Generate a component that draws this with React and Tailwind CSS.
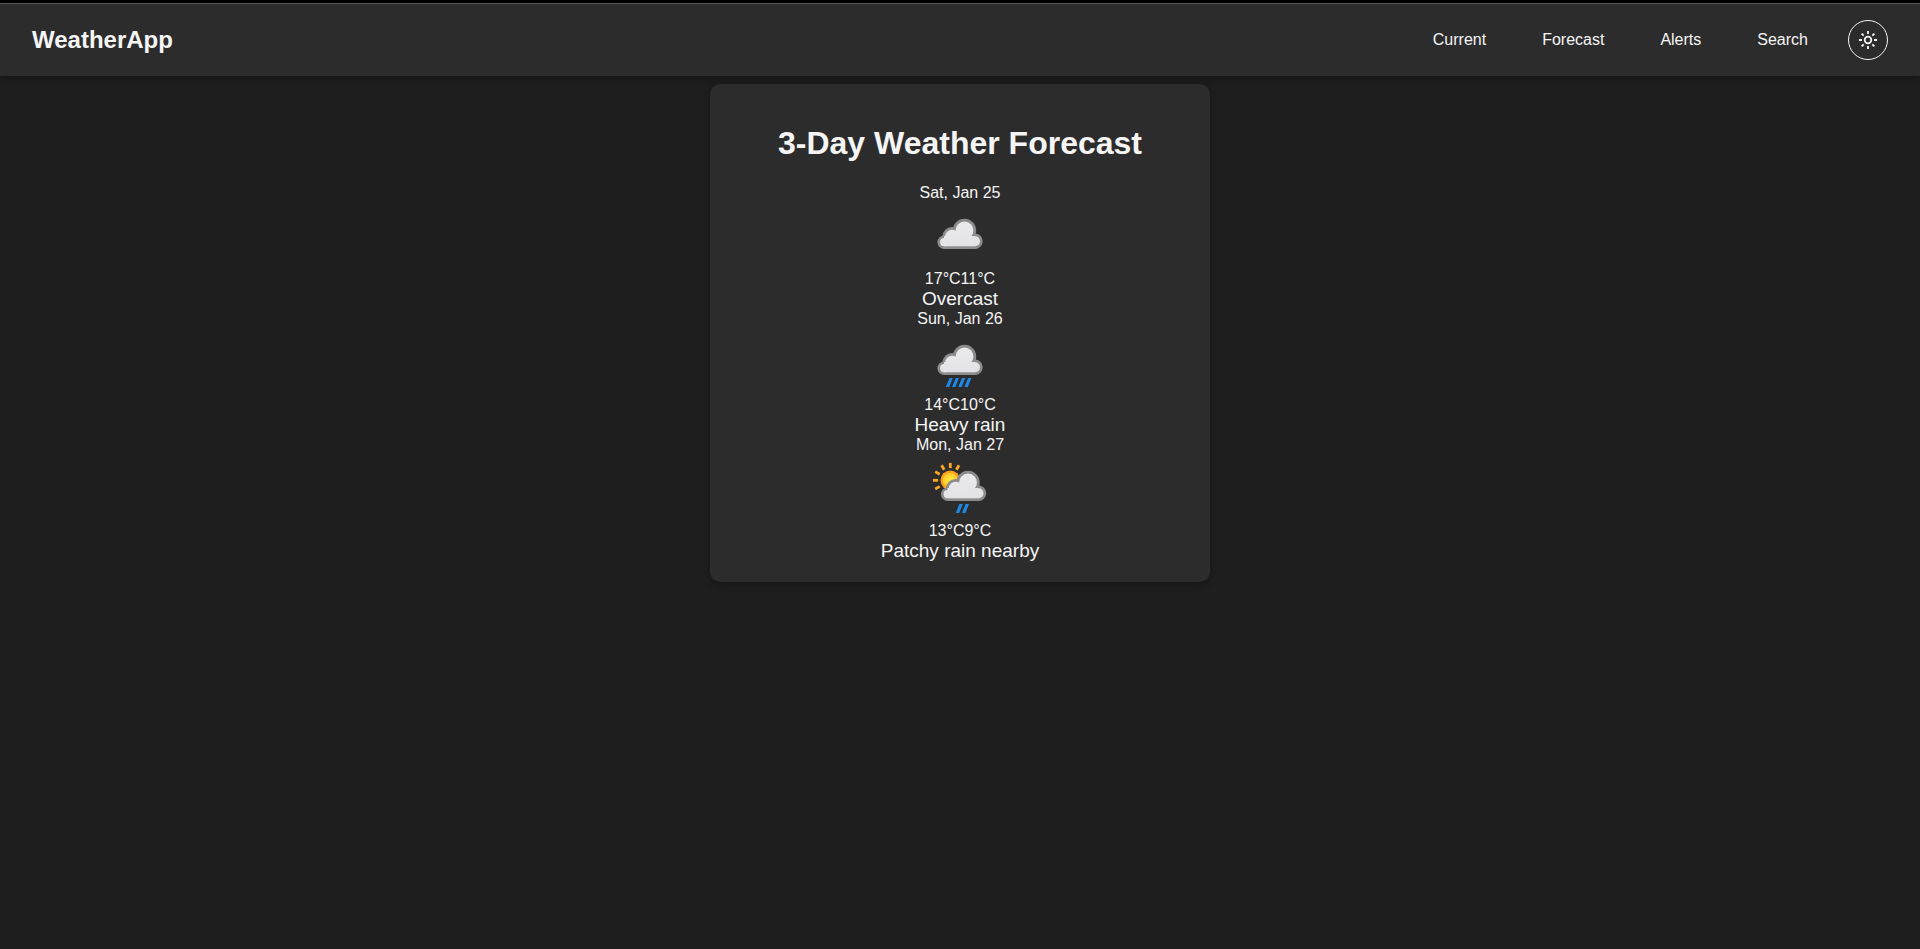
import { useId } from "react";

const LINKS = ["Current", "Forecast", "Alerts", "Search"];

const DAYS = [
  { date: "Sat, Jan 25", high: "17°C", low: "11°C", condition: "Overcast", kind: "cloud" },
  { date: "Sun, Jan 26", high: "14°C", low: "10°C", condition: "Heavy rain", kind: "heavy" },
  { date: "Mon, Jan 27", high: "13°C", low: "9°C", condition: "Patchy rain nearby", kind: "patchy" },
];

const RAY_ANGLES = [-210, -180, -150, -120, -90, -60];

function SunIcon() {
  return (
    <svg viewBox="0 0 20 20" className="size-5" fill="none" stroke="currentColor" strokeWidth="1.8" aria-hidden="true">
      <circle cx="10" cy="10" r="3.3" />
      <path d="M10 1v3M10 16v3M1 10h3M16 10h3M3.6 3.6l2.1 2.1M14.3 14.3l2.1 2.1M3.6 16.4l2.1-2.1M14.3 5.7l2.1-2.1" />
    </svg>
  );
}

function Cloud({ fill }) {
  return (
    <g>
      <g fill="#8c8c8c">
        <circle cx="16.2" cy="41.2" r="6.8" />
        <circle cx="24.2" cy="35.8" r="9.8" />
        <circle cx="36.5" cy="29.5" r="11.7" />
        <circle cx="47" cy="40.3" r="7.7" />
        <rect x="16" y="33" width="31" height="15" />
      </g>
      <g fill={fill}>
        <circle cx="16.2" cy="41.2" r="4.1" />
        <circle cx="24.2" cy="35.8" r="7.1" />
        <circle cx="36.5" cy="29.5" r="8.9" />
        <circle cx="47" cy="40.3" r="5" />
        <rect x="16" y="35" width="31" height="10.3" />
      </g>
    </g>
  );
}

function WeatherIcon({ kind, label }) {
  const id = useId();
  return (
    <svg viewBox="0 1 64 64" className="mx-auto size-16" role="img" aria-label={label}>
      <defs>
        <linearGradient id={id} gradientUnits="userSpaceOnUse" x1="30" y1="20" x2="34" y2="46">
          <stop offset="0" stopColor="#ebebed" />
          <stop offset="1" stopColor="#e3e3e6" />
        </linearGradient>
        <radialGradient id={id + "s"}>
          <stop offset="0.3" stopColor="#ffe23a" />
          <stop offset="0.72" stopColor="#fcc726" />
          <stop offset="0.8" stopColor="#f9a01b" />
          <stop offset="1" stopColor="#f9a01b" />
        </radialGradient>
      </defs>
      {kind === "patchy" && (
        <g>
          <circle cx="22.3" cy="27.3" r="9.8" fill={`url(#${id}s)`} />
          {RAY_ANGLES.map((a) => (
            <path key={a} d="M34.5 27.3h5.2" stroke="#f9a825" strokeWidth="2.8" transform={`rotate(${a} 22.3 27.3)`} />
          ))}
        </g>
      )}
      <g transform={kind === "patchy" ? "translate(3.5 0)" : undefined}>
        <Cloud fill={`url(#${id})`} />
      </g>
      {kind === "heavy" && (
        <path fill="#1e88e5" d="M21.6 51h3.2l-3.6 9h-3.4zM27.8 51H31l-3.6 9H24zM34 51h3.2l-3.6 9h-3.4zM40.2 51h3.2l-3.6 9h-3.4z" />
      )}
      {kind === "patchy" && <path fill="#1e88e5" d="M31.4 51h3.4l-3.6 9h-3.4zM37.6 51H41l-3.6 9H34z" />}
    </svg>
  );
}

export default function App() {
  return (
    <div className="flex min-h-screen flex-col border-t-3 border-black bg-[#1e1e1e] font-['Liberation_Sans',Arial,sans-serif] text-base/[18px] text-[#f5f5f5]">
      <header className="flex items-center justify-between border-t border-[#555555] bg-[#2c2c2c] px-8 py-4 shadow-[0_2px_8px_rgba(0,0,0,0.3)]">
        <a href="#" className="text-2xl font-bold">WeatherApp</a>
        <div className="flex items-center gap-6">
          <nav aria-label="Main" className="flex gap-6">
            {LINKS.map((link) => (
              <a key={link} href={"#" + link.toLowerCase()} className="px-4 py-2">{link}</a>
            ))}
          </nav>
          <button type="button" aria-label="Toggle theme" className="flex size-10 items-center justify-center rounded-full border border-[#f5f5f5]">
            <SunIcon />
          </button>
        </div>
      </header>
      <main id="forecast" className="mx-auto mt-2 w-full max-w-[500px] rounded-[10px] bg-[#2c2c2c] p-5 text-center shadow-[0_2px_8px_rgba(0,0,0,0.3)]">
        <h1 className="mt-[21px] mb-[22px] text-[32px]/[37px] font-bold">3-Day Weather Forecast</h1>
        {DAYS.map((day) => (
          <section key={day.date}>
            <p>{day.date}</p>
            <div className="pb-1">
              <WeatherIcon kind={day.kind} label={day.condition} />
            </div>
            <p>
              <span>{day.high}</span>
              <span>{day.low}</span>
            </p>
            <p className="text-[19px]/[22px]">{day.condition}</p>
          </section>
        ))}
      </main>
    </div>
  );
}
